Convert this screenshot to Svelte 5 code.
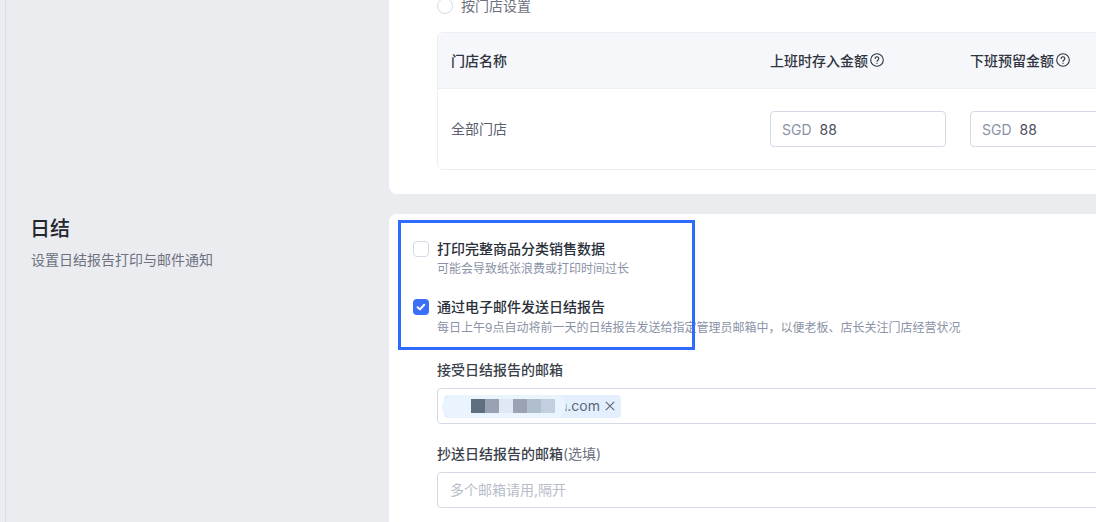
<script lang="ts">
  const stores = [{ name: '全部门店', deposit: '88', reserve: '88' }];

  const mosaic = ['#5f6f80', '#98a2b3', '#dfe8f5', '#9aa3b3', '#b0bfcc', '#c3cede'];
</script>

<div class="page">
  <section class="row first">
    <div class="side"></div>
    <div class="card top-card">
      <label class="radio"><span class="dot"></span>按门店设置</label>
      <div class="table">
        <div class="tr head">
          <div class="td name">门店名称</div>
          <div class="td amount">
            上班时存入金额
            <svg class="help" viewBox="0 0 14 14" width="14" height="14" fill="none" stroke="currentColor" stroke-width="1.1">
              <circle cx="7" cy="7" r="6.3" />
              <path d="M5.2 5.5a1.8 1.8 0 1 1 2.8 1.5c-.6.4-1 .7-1 1.5" stroke-linecap="round" />
              <circle cx="7" cy="10.4" r=".6" fill="currentColor" stroke="none" />
            </svg>
          </div>
          <div class="td amount">
            下班预留金额
            <svg class="help" viewBox="0 0 14 14" width="14" height="14" fill="none" stroke="currentColor" stroke-width="1.1">
              <circle cx="7" cy="7" r="6.3" />
              <path d="M5.2 5.5a1.8 1.8 0 1 1 2.8 1.5c-.6.4-1 .7-1 1.5" stroke-linecap="round" />
              <circle cx="7" cy="10.4" r=".6" fill="currentColor" stroke="none" />
            </svg>
          </div>
        </div>
        {#each stores as store}
          <div class="tr body">
            <div class="td name">{store.name}</div>
            <div class="td amount">
              <div class="money"><span>SGD</span>{store.deposit}</div>
            </div>
            <div class="td amount">
              <div class="money"><span>SGD</span>{store.reserve}</div>
            </div>
          </div>
        {/each}
      </div>
    </div>
  </section>

  <section class="row">
    <div class="side">
      <h2>日结</h2>
      <p>设置日结报告打印与邮件通知</p>
    </div>
    <div class="card bottom-card">
      <div class="marker"></div>

      <div class="check">
        <span class="box"></span>
        <div>
          <div class="check-title">打印完整商品分类销售数据</div>
          <div class="hint">可能会导致纸张浪费或打印时间过长</div>
        </div>
      </div>

      <div class="check second">
        <span class="box on">
          <svg viewBox="0 0 16 16" width="16" height="16" fill="none">
            <path d="M4.6 8.2l2.3 2.2 4.3-4.6" stroke="#fff" stroke-width="2" stroke-linecap="round" stroke-linejoin="round" />
          </svg>
        </span>
        <div>
          <div class="check-title">通过电子邮件发送日结报告</div>
          <div class="hint">每日上午9点自动将前一天的日结报告发送给指定管理员邮箱中，以便老板、店长关注门店经营状况</div>
        </div>
      </div>

      <div class="field first-field">
        <div class="field-label">接受日结报告的邮箱</div>
        <div class="input tags">
          <span class="tag">
            <span class="tag-text">a.com</span>
            <svg viewBox="0 0 10 10" width="10" height="10" fill="none" stroke="#5c6679" stroke-width="1.1">
              <path d="M.8.8l8.4 8.4M9.2.8L.8 9.2" />
            </svg>
            <span class="blur"></span>
            <span class="pixels">
              {#each mosaic as c}
                <i style="background: {c}"></i>
              {/each}
            </span>
          </span>
        </div>
      </div>

      <div class="field second-field">
        <div class="field-label">抄送日结报告的邮箱<span>(选填)</span></div>
        <div class="input placeholder">多个邮箱请用,隔开</div>
      </div>
    </div>
  </section>
</div>

<style>
  :global(body) {
    margin: 0;
    background: #ebecf0;
    overflow: hidden;
  }

  .page {
    width: 1091px;
    height: 522px;
    overflow: hidden;
    box-sizing: border-box;
    border-left: 1px solid #d9dde9;
    margin-left: 5px;
    font-family: Inter, 'Noto Sans CJK SC', sans-serif;
    font-size: 14px;
    color: #2a2f3a;
  }

  .row {
    display: flex;
    margin-bottom: 20px;
  }

  .row.first {
    margin-top: -20px;
  }

  .side {
    width: 383px;
    flex: none;
    padding-left: 25px;
    box-sizing: border-box;
  }

  .side h2 {
    margin: 0;
    padding-top: 1px;
    margin-left: -1px;
    font-size: 20px;
    line-height: 28px;
    font-weight: 500;
    color: #23262f;
  }

  .side p {
    margin: 7px 0 0;
    line-height: 20px;
    color: #6c7280;
  }

  .card {
    flex: 1;
    min-width: 0;
    background: #fff;
    border-radius: 8px 0 0 8px;
    padding-left: 48px;
    position: relative;
  }

  .top-card {
    height: 214px;
    padding-top: 18px;
    box-sizing: border-box;
  }

  .radio {
    display: flex;
    align-items: center;
    gap: 8px;
    height: 16px;
    color: #6c7280;
    line-height: 16px;
  }

  .dot {
    width: 14px;
    height: 14px;
    border: 1px solid #d5d9e6;
    border-radius: 50%;
    background: #fff;
  }

  .table {
    margin-top: 18px;
    width: 800px;
    border: 1px solid #eceef3;
    border-radius: 6px;
  }

  .tr {
    display: flex;
    align-items: center;
  }

  .head {
    height: 56px;
    box-sizing: border-box;
    padding-bottom: 2px;
    background: #f6f7fb;
    border-bottom: 1px solid #eceef3;
    border-radius: 6px 6px 0 0;
    color: #2f3440;
  }

  .head .td {
    font-weight: 500;
  }

  .body {
    height: 80px;
    color: #5a6070;
  }

  .td.name {
    width: 332px;
    padding-left: 13px;
    padding-bottom: 3px;
    box-sizing: border-box;
    flex: none;
  }

  .head .td.name {
    padding-bottom: 0;
  }

  .td.amount {
    width: 200px;
    flex: none;
    display: flex;
    align-items: center;
    gap: 2px;
  }

  .help {
    color: #2f3440;
  }

  .money {
    width: 176px;
    height: 36px;
    box-sizing: border-box;
    border: 1px solid #d5d9e6;
    border-radius: 4px;
    display: flex;
    align-items: center;
    padding-left: 11px;
    color: #4a5060;
  }

  .money span {
    color: #8a92a6;
    margin-right: 8px;
  }

  .bottom-card {
    height: 400px;
    padding-top: 26px;
    border-bottom-left-radius: 0;
  }

  .marker {
    position: absolute;
    left: 9px;
    top: 6px;
    width: 297px;
    height: 130px;
    box-sizing: border-box;
    border: 3px solid #2f6bff;
    pointer-events: none;
  }

  .check {
    display: flex;
    gap: 8px;
    margin-left: -24px;
    height: 40px;
  }

  .check.second {
    margin-top: 18px;
  }

  .check.second .hint {
    margin-top: 3px;
  }

  .box {
    width: 16px;
    height: 16px;
    margin-top: 1px;
    flex: none;
    box-sizing: border-box;
    border: 1px solid #d5d9e6;
    border-radius: 4px;
    background: #fff;
  }

  .box.on {
    background: #3b6ff5;
    border: none;
    display: block;
  }

  .box.on svg {
    display: block;
  }

  .check-title {
    line-height: 18px;
    font-weight: 500;
    color: #2a2f3a;
  }

  .hint {
    margin-top: 2px;
    font-size: 12px;
    line-height: 17px;
    color: #8a92a6;
    white-space: nowrap;
  }

  .field-label {
    line-height: 20px;
    font-weight: 500;
    color: #3a3f4b;
  }

  .field-label span {
    font-weight: 400;
    color: #6c7280;
  }

  .first-field {
    margin-top: 22px;
  }

  .second-field {
    margin-top: 20px;
  }

  .input {
    margin-top: 8px;
    width: 720px;
    height: 36px;
    box-sizing: border-box;
    border: 1px solid #d5d9e6;
    border-radius: 4px;
    display: flex;
    align-items: center;
  }

  .tags {
    padding-left: 6px;
  }

  .placeholder {
    padding-left: 12px;
    padding-bottom: 2px;
    color: #b8bdca;
  }

  .tag {
    position: relative;
    width: 177px;
    height: 23px;
    box-sizing: border-box;
    background: #e3effc;
    border-radius: 4px;
    display: flex;
    align-items: center;
    justify-content: flex-end;
    gap: 5px;
    padding-right: 6px;
    color: #5c6679;
  }

  .tag-text {
    line-height: 21px;
    padding-bottom: 2px;
  }

  .blur {
    position: absolute;
    left: -2px;
    top: 0;
    width: 124px;
    height: 23px;
    border-radius: 12px;
    background: #eaf4fe;
  }

  .pixels {
    position: absolute;
    left: 27px;
    top: 4px;
    display: flex;
    height: 14px;
  }

  .pixels i {
    width: 14px;
    height: 14px;
    display: block;
  }
</style>
